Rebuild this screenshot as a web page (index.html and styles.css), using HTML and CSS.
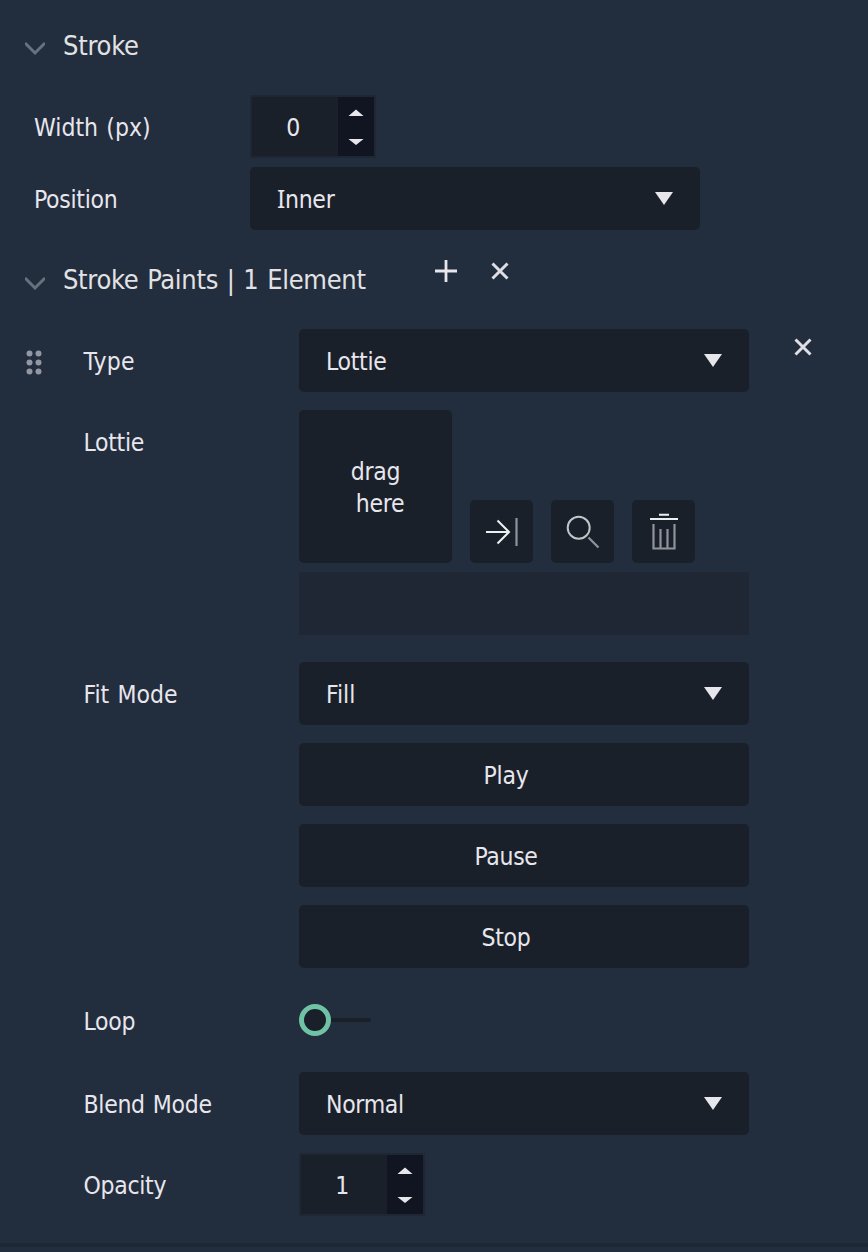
FILE: index.html
```
<!DOCTYPE html>
<html lang="en">
<head>
<meta charset="utf-8">
<title>Stroke</title>
<link rel="stylesheet" href="styles.css">
</head>
<body>
<main class="panel">
  <header class="heading heading-first">
    <svg class="chevron" width="20" height="18" viewBox="0 0 20 18"><path d="M0 4 10 14 20 4"/></svg>
    <h2>Stroke</h2>
  </header>

  <section class="outer">
    <div class="row row-width">
      <span class="label t-wide">Width (px)</span>
      <div class="spin"><span class="value">0</span><span class="steps"><svg width="16" height="38" viewBox="0 0 16 38"><path d="M.5 8 8 1.500 15.500 8zM.5 31h15L8 37z"/></svg></span></div>
    </div>
    <div class="row">
      <span class="label">Position</span>
      <div class="select"><span class="text"><span class="cap-i">I</span>nner</span><svg class="arrow" width="18" height="13" viewBox="0 0 18 13"><path d="M0 0h18L9 13z"/></svg></div>
    </div>
  </section>

  <header class="heading heading-paints">
    <svg class="chevron" width="20" height="18" viewBox="0 0 20 18"><path d="M0 4 10 14 20 4"/></svg>
    <h2 class="t-paints">Stroke Paints | 1 Element</h2>
    <svg class="add" width="22" height="22" viewBox="0 0 22 22"><path d="M11 0v22M0 11h22"/></svg>
    <svg class="cross" width="18" height="18" viewBox="0 0 18 18"><path d="m1.500 1.500 15 15m0-15-15 15"/></svg>
  </header>

  <section class="inner">
    <div class="row row-type">
      <svg class="grip" width="16" height="25" viewBox="0 0 16 25"><circle cx="3.500" cy="3.500" r="3"/><circle cx="12.500" cy="3.500" r="3"/><circle cx="3.500" cy="12.500" r="3"/><circle cx="12.500" cy="12.500" r="3"/><circle cx="3.500" cy="21.500" r="3"/><circle cx="12.500" cy="21.500" r="3"/></svg>
      <span class="label t-type">Type</span>
      <div class="select"><span class="text">Lottie</span><svg class="arrow" width="18" height="13" viewBox="0 0 18 13"><path d="M0 0h18L9 13z"/></svg></div>
      <svg class="cross cross-row" width="18" height="18" viewBox="0 0 18 18"><path d="m1.500 1.500 15 15m0-15-15 15"/></svg>
    </div>

    <div class="row row-lottie">
      <span class="label">Lottie</span>
      <div class="asset">
        <div class="asset-top">
          <div class="drop"><span>drag</span><span class="drop-second">here</span></div>
          <button class="tool"><svg width="63" height="63" viewBox="0 0 63 63"><path class="bright" d="M16 32h23M27.500 20.500 39 32 27.500 43.500"/><path class="dim" d="M46.500 18v28"/></svg></button>
          <button class="tool"><svg width="63" height="63" viewBox="0 0 63 63"><circle class="mid" cx="27.700" cy="27.700" r="11"/><path class="dim" d="m37.500 37.500 10 10"/></svg></button>
          <button class="tool"><svg width="63" height="63" viewBox="0 0 63 63"><path class="bright" d="M27 14.800h10M18 19h28"/><path class="dim" d="M21.500 24v24.500h21V24M28.500 29v19M35.500 29v19"/></svg></button>
        </div>
        <div class="field"></div>
      </div>
    </div>

    <div class="row">
      <span class="label t-wide">Fit Mode</span>
      <div class="select"><span class="text t-wide">Fill</span><svg class="arrow" width="18" height="13" viewBox="0 0 18 13"><path d="M0 0h18L9 13z"/></svg></div>
    </div>

    <div class="actions">
      <button class="action">Play</button>
      <button class="action">Pause</button>
      <button class="action">Stop</button>
    </div>

    <div class="row row-loop">
      <span class="label">Loop</span>
      <div class="toggle"><span class="knob"></span><span class="track"></span></div>
    </div>

    <div class="row">
      <span class="label">Blend Mode</span>
      <div class="select"><span class="text">Normal</span><svg class="arrow" width="18" height="13" viewBox="0 0 18 13"><path d="M0 0h18L9 13z"/></svg></div>
    </div>

    <div class="row row-opacity">
      <span class="label">Opacity</span>
      <div class="spin"><span class="value">1</span><span class="steps"><svg width="16" height="38" viewBox="0 0 16 38"><path d="M.5 8 8 1.500 15.500 8zM.5 31h15L8 37z"/></svg></span></div>
    </div>
  </section>
  <div class="divider"></div>
</main>
</body>
</html>
```
FILE: styles.css
```
* { box-sizing: border-box; }
body {
  margin: 0;
  background: #222d3d;
  color: #e8e6ed;
  font: 24.500px/32px Tahoma, "DejaVu Sans Condensed", "DejaVu Sans", sans-serif;
  font-stretch: condensed;
  letter-spacing: -.3px;
  word-spacing: 1.300px;
}
svg { display: block; flex: none; }
.panel { width: 868px; height: 1252px; overflow: hidden; }
.heading { display: flex; align-items: center; padding-left: 25px; }
.heading-first { height: 90px; }
.heading-paints { height: 97px; margin-top: 1px; }
h2 { margin: 0 0 0 18px; font-size: 27px; font-weight: 400; line-height: 36px; letter-spacing: -.25px; color: #e2e2e4; white-space: nowrap; }
.t-paints { width: 372px; letter-spacing: -.3px; }
.heading-first h2 { padding-top: 1px; }
.chevron { fill: none; stroke: #68727f; stroke-width: 3; margin-top: 6px; }
.add { fill: none; stroke: #e8e6ed; stroke-width: 2.800; margin: 0 34px 18px 0; }
.cross { fill: none; stroke: #dfdde5; stroke-width: 3; }
.heading .cross { margin-bottom: 18px; }
.outer { padding: 5px 0 0 34px; }
.row { display: flex; align-items: center; height: 63px; }
.row-width { margin-bottom: 9px; }
.label { width: 216px; flex: none; padding: 2px 0 0 .5px; white-space: nowrap; }
.outer .label { padding-left: 0; }
.t-wide { letter-spacing: 0; }
.t-type { letter-spacing: .25px; }
.inner { padding-left: 83px; }
.select {
  display: flex; align-items: center; justify-content: space-between;
  width: 450px; height: 63px; padding: 0 27px; background: #1a2029; border-radius: 5px;
}
.text { padding-top: 2px; }
.arrow { fill: #e8e6ed; margin-bottom: 1px; }
.spin {
  display: flex; width: 126px; height: 63px; border: 2px solid #1f2735; background: #1a2029;
}
.value { width: 86px; line-height: 61px; text-align: center; padding-right: 4px; }
.steps { display: flex; align-items: center; justify-content: center; width: 36px; background: #111522; }
.steps svg { fill: #e8e6ed; }
.cap-i { font-family: "Noto Sans"; font-stretch: normal; line-height: 1; }
.row-type { margin-top: 1px; margin-bottom: 18px; }
.grip { fill: #9297a3; margin: 4px 41px 0 -57px; }
.cross-row { margin: 0 0 27px 45px; }
.row-lottie { height: 225px; align-items: flex-start; margin-bottom: 27px; }
.row-lottie .label { padding-top: 1px; line-height: 63px; }
.asset { display: grid; gap: 9px; }
.asset-top { display: flex; align-items: flex-end; gap: 18px; }
.drop {
  display: flex; flex-direction: column; align-items: center; justify-content: center;
  width: 153px; height: 153px; padding-top: 2px; background: #1a2029; border-radius: 5px;
}
.drop-second { padding-left: 9px; }
button { border: 0; padding: 0; background: #1a2029; border-radius: 5px; color: inherit; font: inherit; letter-spacing: inherit; }
.tool { width: 63px; height: 63px; fill: none; }
.bright { stroke: #edf0f1; stroke-width: 2; }
.mid { stroke: #c3c6c9; stroke-width: 2; }
.dim { stroke: #91939b; stroke-width: 2.200; }
.field { width: 450px; height: 63px; background: #1f2735; }
.actions { display: grid; gap: 18px; margin: 18px 0 21px 216px; width: 450px; }
.action { height: 63px; padding: 2px 36px 0 0; }
.row-loop { margin-bottom: 20px; }
.toggle { display: flex; align-items: center; margin-bottom: 1px; }
.knob { width: 32px; height: 32px; border: 5px solid #70c2a4; border-radius: 50%; background: #1a2029; }
.track { width: 40px; height: 4px; background: #1a2029; border-radius: 0 2px 2px 0; }
.row-opacity { margin-top: 18px; }
.divider { height: 4px; margin-top: 27px; background: #1d2835; }
```
